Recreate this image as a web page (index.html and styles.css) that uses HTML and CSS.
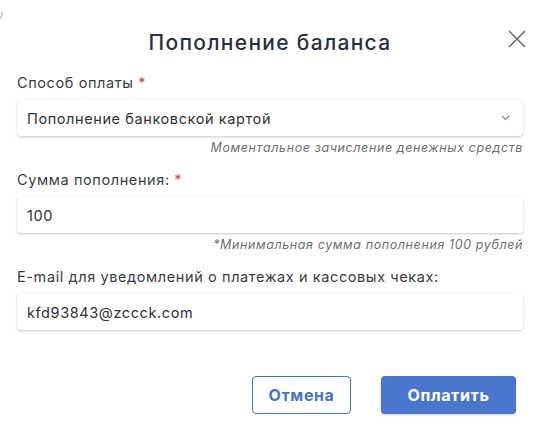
FILE: index.html
```html
<!DOCTYPE html>
<html lang="ru">
<head>
<meta charset="utf-8">
<link rel="stylesheet" href="styles.css">
</head>
<body>
<div class="stray">/</div>
<div class="dialog">
  <header class="head">
    <h1 class="title">Пополнение баланса</h1>
    <button class="close" aria-label="Закрыть">
      <svg width="18" height="18" viewBox="0 0 18 18"><path d="M1 1L17 17M17 1L1 17" stroke="#6b6f75" stroke-width="1.6" fill="none"/></svg>
    </button>
  </header>
  <div class="field">
    <label class="label">Способ оплаты <span class="req">*</span></label>
    <div class="box select">
      <span>Пополнение банковской картой</span>
      <svg class="chev" width="9" height="6" viewBox="0 0 9 6"><path d="M1 1L4.5 4.5L8 1" stroke="#6a7bb8" stroke-width="1.1" fill="none"/></svg>
    </div>
    <div class="hint">Моментальное зачисление денежных средств</div>
  </div>
  <div class="field">
    <label class="label">Сумма пополнения: <span class="req">*</span></label>
    <div class="box">100</div>
    <div class="hint">*Минимальная сумма пополнения 100 рублей</div>
  </div>
  <div class="field">
    <label class="label">E-mail для уведомлений о платежах и кассовых чеках:</label>
    <div class="box">kfd93843@zccck.com</div>
  </div>
  <div class="actions">
    <button class="btn btn-outline">Отмена</button>
    <button class="btn btn-primary">Оплатить</button>
  </div>
</div>
</body>
</html>
```
FILE: styles.css
```css
html, body {
  margin: 0;
  padding: 0;
  background: #ffffff;
}
body {
  font-family: Inter, "Noto Sans", sans-serif;
  color: #2f3237;
  width: 540px;
  height: 435px;
  overflow: hidden;
  position: relative;
}
.stray {
  position: absolute;
  left: 0;
  top: 10px;
  font-size: 8px;
  line-height: 10px;
  color: #777;
}
.dialog {
  padding: 0 17px 0 17px;
}
.head {
  display: flex;
  justify-content: center;
  align-items: center;
  position: relative;
  height: 84px;
}
.title {
  margin: 0;
  font-size: 21px;
  font-weight: 500;
  color: #283142;
  letter-spacing: 1.3px;
}
.close {
  position: absolute;
  right: -3px;
  top: 30px;
  background: none;
  border: 0;
  padding: 0;
  width: 18px;
  height: 18px;
}
.field {
  display: flex;
  flex-direction: column;
}
.label {
  font-size: 14.5px;
  letter-spacing: 0.6px;
  color: #3a3d42;
  line-height: 18px;
  margin-top: -10px;
  margin-bottom: 8px;
}
.req { color: #e5484d; }
.box {
  height: 36px;
  border-radius: 4px;
  box-shadow: 0 1px 3px rgba(0,0,0,0.22), 0 0 1px rgba(0,0,0,0.06);
  background: #fff;
  display: flex;
  align-items: center;
  padding: 0 10px;
  font-size: 14.5px;
  letter-spacing: 0.6px;
  color: #2f3237;
}
.select { justify-content: space-between; padding-right: 13px; }
.hint {
  align-self: flex-end;
  font-size: 12.5px;
  letter-spacing: 0.6px;
  font-style: italic;
  color: #6d7075;
  margin-top: 4px;
  line-height: 15px;
  margin-bottom: 26px;
}
.actions {
  display: flex;
  justify-content: flex-end;
  gap: 30px;
  margin-top: 46px;
  padding-right: 7px;
}
.btn {
  height: 38px;
  border-radius: 4px;
  font-family: inherit;
  font-size: 16px;
  letter-spacing: 0.6px;
  font-weight: 700;
}
.btn-outline {
  width: 99px;
  background: #fff;
  color: #4a73c6;
  border: 1px solid #4a73c6;
}
.btn-primary {
  width: 135px;
  background: #4a76cf;
  color: #fff;
  border: 0;
  box-shadow: 0 1px 2px rgba(0,0,0,0.2);
}
```
